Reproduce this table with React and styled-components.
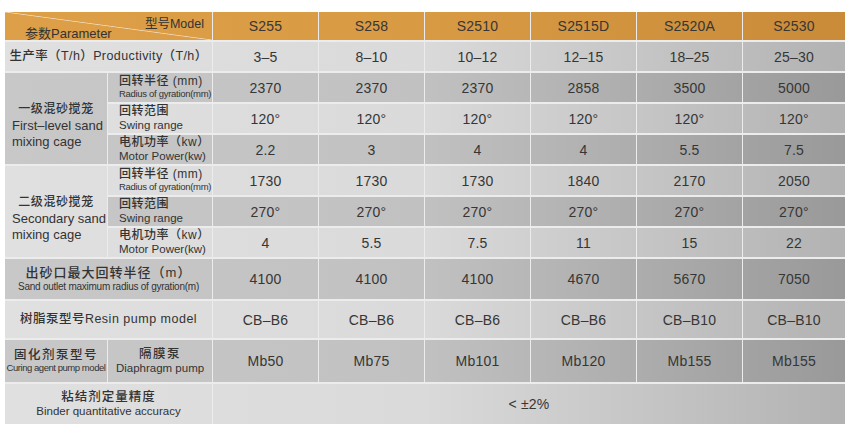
import React from "react";
import styled, { createGlobalStyle } from "styled-components";

const GlobalStyle = createGlobalStyle`
  html, body {
    margin: 0;
    padding: 0;
    background: #ffffff;
  }
  body {
    font-family: "Liberation Sans", "Noto Sans CJK SC", Arial, sans-serif;
    color: #333333;
  }
`

const tones = {
  orange: "linear-gradient(to right, #dd9f48 0%, #d89a43 50%, #c98b38 100%)",
  light: "linear-gradient(to right, #e0e0e0 0%, #dadada 50%, #b2b2b2 100%)",
  dark: "linear-gradient(to right, #c8c8c8 0%, #c1c1c1 50%, #999999 100%)",
}

const Page = styled.div`
  width: 848px;
  height: 429px;
  padding: 12px 0 0 5px;
  box-sizing: border-box;
  overflow: hidden;
`

const Table = styled.div`
  display: grid;
  width: 840px;
  grid-template-columns: 102px 104px 105px 105px 105px 105px 105px 102px;
  grid-template-rows: 28px repeat(7, 29px) 40px 37px 42px 40px;
  column-gap: 1px;
  row-gap: 2px;
  background: #ececec;
`

const Cell = styled.div`
  grid-column: span ${(p) => p.$span || 1};
  grid-row: span ${(p) => p.$rows || 1};
  background: ${(p) => tones[p.$tone]};
  background-attachment: fixed;
  display: flex;
  flex-direction: column;
  justify-content: center;
  align-items: center;
  text-align: center;
  box-sizing: border-box;
  min-width: 0;
  overflow: hidden;
`

const Value = styled.span`
  font-size: 14px;
  color: #363636;
  letter-spacing: 0.2px;
`

const CornerCell = styled(Cell)`
  background: linear-gradient(
      to top right,
      transparent calc(50% - 0.8px),
      rgba(255, 255, 255, 0.6) 50%,
      transparent calc(50% + 0.8px)
    ),
    ${tones.orange};
  background-attachment: scroll, fixed;
  justify-content: flex-start;
  align-items: stretch;
  padding: 6px 8px 0 20px;
`

const CornerTop = styled.span`
  align-self: flex-end;
  font-size: 12.5px;
  line-height: 13px;
`

const CornerBottom = styled.span`
  align-self: flex-start;
  font-size: 13px;
  line-height: 13px;
  margin-top: -4px;
`

const Cn = styled.span`
  font-size: ${(p) => p.$size || 12.5}px;
  font-weight: 500;
  line-height: 1.15;
  letter-spacing: ${(p) => p.$spacing || 0.5}px;
  white-space: nowrap;
`

const En = styled.span`
  font-size: ${(p) => p.$size || 11}px;
  line-height: 1.15;
  letter-spacing: ${(p) => p.$spacing || 0}px;
  white-space: nowrap;
`

const SubLabel = styled(Cell)`
  align-items: flex-start;
  text-align: left;
  padding-left: 11px;
`

const Group = styled(Cell)`
  align-items: stretch;
  padding: 14px 0 0 7px;
`

const GroupCn = styled.span`
  font-size: 12px;
  font-weight: 500;
  letter-spacing: 0.6px;
  line-height: 17px;
  text-align: center;
  padding-right: 7px;
`

const GroupEn = styled.span`
  font-size: 13px;
  line-height: 16px;
  text-align: left;
  white-space: nowrap;
`

const models = ["S255", "S258", "S2510", "S2515D", "S2520A", "S2530"];

const rows = {
  productivity: ["3–5", "8–10", "10–12", "12–15", "18–25", "25–30"],
  radius1: ["2370", "2370", "2370", "2858", "3500", "5000"],
  swing1: ["120°", "120°", "120°", "120°", "120°", "120°"],
  power1: ["2.2", "3", "4", "4", "5.5", "7.5"],
  radius2: ["1730", "1730", "1730", "1840", "2170", "2050"],
  swing2: ["270°", "270°", "270°", "270°", "270°", "270°"],
  power2: ["4", "5.5", "7.5", "11", "15", "22"],
  outlet: ["4100", "4100", "4100", "4670", "5670", "7050"],
  resin: ["CB–B6", "CB–B6", "CB–B6", "CB–B6", "CB–B10", "CB–B10"],
  curing: ["Mb50", "Mb75", "Mb101", "Mb120", "Mb155", "Mb155"],
};

function Values({ list, tone }) {
  return list.map((v, i) => (
    <Cell key={i} $tone={tone}>
      <Value>{v}</Value>
    </Cell>
  ));
}

function Radius({ tone }) {
  return (
    <SubLabel $tone={tone}>
      <Cn $size={12}>回转半径 (mm)</Cn>
      <En $size={9.5} $spacing={-0.3}>Radius of gyration(mm)</En>
    </SubLabel>
  );
}

function Swing({ tone }) {
  return (
    <SubLabel $tone={tone}>
      <Cn $size={12}>回转范围</Cn>
      <En $size={11.5}>Swing range</En>
    </SubLabel>
  );
}

function Power({ tone }) {
  return (
    <SubLabel $tone={tone}>
      <Cn $size={12}>电机功率（kw）</Cn>
      <En $size={11.5}>Motor Power(kw)</En>
    </SubLabel>
  );
}

export default function App() {
  return (
    <Page>
      <GlobalStyle />
      <Table>
        <CornerCell $span={2} $tone="orange">
          <CornerTop>型号Model</CornerTop>
          <CornerBottom>参数Parameter</CornerBottom>
        </CornerCell>
        {models.map((m) => (
          <Cell key={m} $tone="orange">
            <Value>{m}</Value>
          </Cell>
        ))}

        <Cell $span={2} $tone="light">
          <Cn $size={12.5} $spacing={0.4}>生产率（T/h）Productivity（T/h）</Cn>
        </Cell>
        <Values list={rows.productivity} tone="light" />

        <Group $rows={3} $tone="dark">
          <GroupCn>一级混砂搅笼</GroupCn>
          <GroupEn>First–level sand</GroupEn>
          <GroupEn>mixing cage</GroupEn>
        </Group>
        <Radius tone="dark" />
        <Values list={rows.radius1} tone="dark" />
        <Swing tone="light" />
        <Values list={rows.swing1} tone="light" />
        <Power tone="dark" />
        <Values list={rows.power1} tone="dark" />

        <Group $rows={3} $tone="light">
          <GroupCn>二级混砂搅笼</GroupCn>
          <GroupEn>Secondary sand</GroupEn>
          <GroupEn>mixing cage</GroupEn>
        </Group>
        <Radius tone="light" />
        <Values list={rows.radius2} tone="light" />
        <Swing tone="dark" />
        <Values list={rows.swing2} tone="dark" />
        <Power tone="light" />
        <Values list={rows.power2} tone="light" />

        <Cell $span={2} $tone="dark">
          <Cn $size={13} $spacing={1}>出砂口最大回转半径（m）</Cn>
          <En $size={10} $spacing={-0.25}>Sand outlet maximum radius of gyration(m)</En>
        </Cell>
        <Values list={rows.outlet} tone="dark" />

        <Cell $span={2} $tone="light">
          <Cn $size={12.5} $spacing={0.5}>树脂泵型号Resin pump model</Cn>
        </Cell>
        <Values list={rows.resin} tone="light" />

        <Cell $tone="dark">
          <Cn $size={12.5} $spacing={1.5}>固化剂泵型号</Cn>
          <En $size={9.5} $spacing={-0.45}>Curing agent pump model</En>
        </Cell>
        <Cell $tone="dark">
          <Cn $size={12.5} $spacing={1.5}>隔膜泵</Cn>
          <En $size={11.5}>Diaphragm pump</En>
        </Cell>
        <Values list={rows.curing} tone="dark" />

        <Cell $span={2} $tone="light">
          <Cn $size={12.5} $spacing={1}>粘结剂定量精度</Cn>
          <En $size={11.5}>Binder quantitative accuracy</En>
        </Cell>
        <Cell $span={6} $tone="light">
          <Value>&lt; ±2%</Value>
        </Cell>
      </Table>
    </Page>
  );
}
